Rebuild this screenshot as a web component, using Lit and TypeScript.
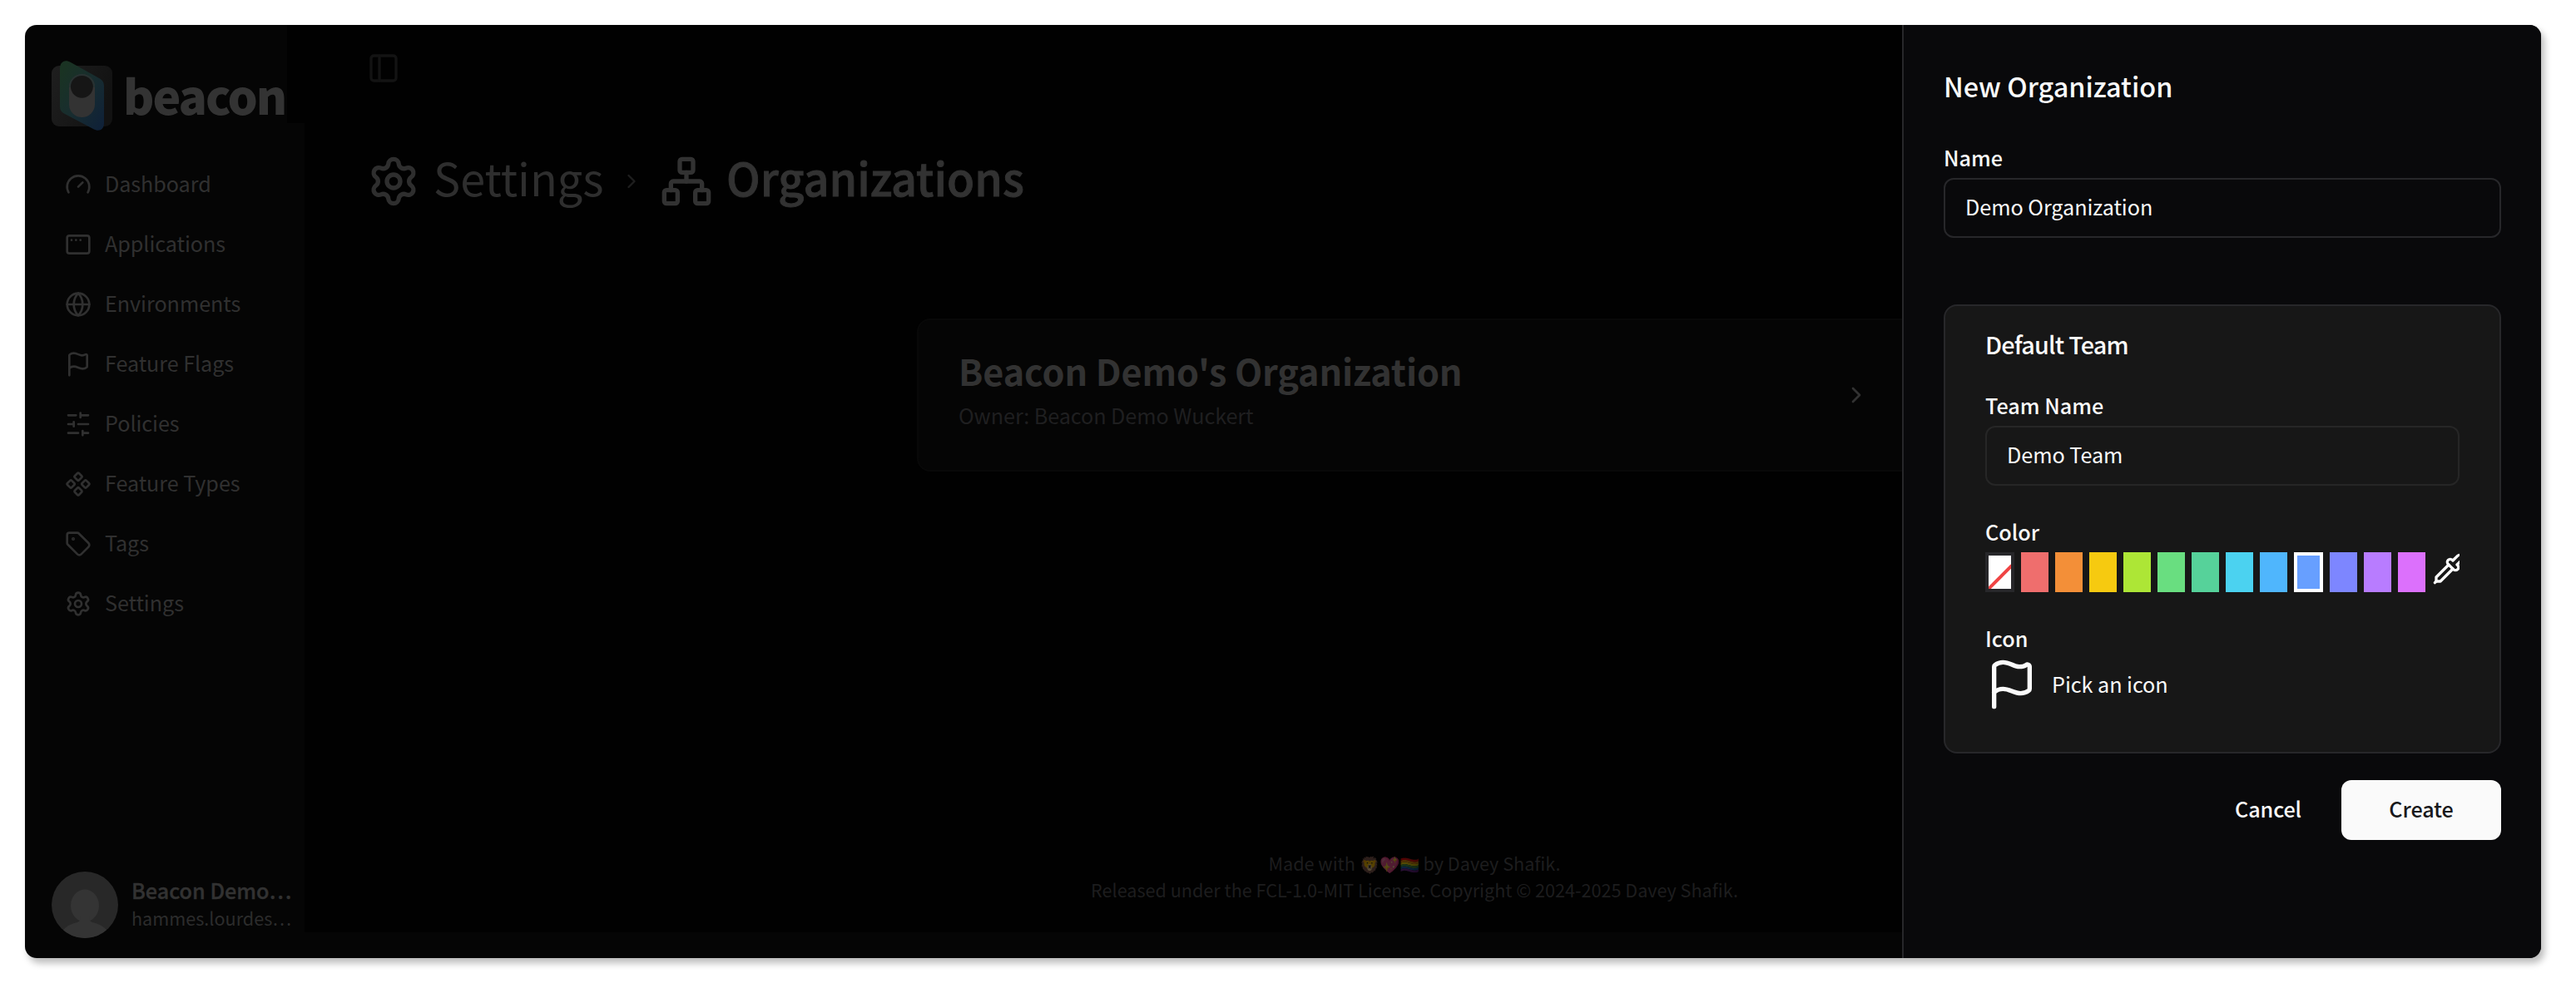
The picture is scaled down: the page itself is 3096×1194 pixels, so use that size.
import { LitElement, html, svg, css } from "lit";
import { classMap } from "lit/directives/class-map.js";
import { styleMap } from "lit/directives/style-map.js";

const ICONS: Record<string, unknown> = {
  gauge: svg`<path d="m12 14 4-4"/><path d="M3.34 19a10 10 0 1 1 17.32 0"/>`,
  app: svg`<rect width="20" height="16" x="2" y="4" rx="2"/><path d="M6 8h.01"/><path d="M10 8h.01"/><path d="M14 8h.01"/>`,
  globe: svg`<circle cx="12" cy="12" r="10"/><path d="M12 2a14.5 14.5 0 0 0 0 20 14.5 14.5 0 0 0 0-20"/><path d="M2 12h20"/>`,
  flag: svg`<path d="M4 22V4a1 1 0 0 1 .4-.8A6 6 0 0 1 8 2c3 0 5 2 7.333 2q2 0 3.067-.8A1 1 0 0 1 20 4v10a1 1 0 0 1-.4.8A6 6 0 0 1 16 16c-3 0-5-2-8-2a6 6 0 0 0-4 1.528"/>`,
  sliders: svg`<path d="M21 4h-7M10 4H3M21 12h-9M8 12H3M21 20h-5M12 20H3M14 2v4M8 10v4M16 18v4"/>`,
  component: svg`<path d="M15.536 11.293a1 1 0 0 0 0 1.414l2.376 2.377a1 1 0 0 0 1.414 0l2.377-2.377a1 1 0 0 0 0-1.414l-2.377-2.377a1 1 0 0 0-1.414 0z"/><path d="M2.297 11.293a1 1 0 0 0 0 1.414l2.377 2.377a1 1 0 0 0 1.414 0l2.377-2.377a1 1 0 0 0 0-1.414L6.088 8.916a1 1 0 0 0-1.414 0z"/><path d="M8.916 17.912a1 1 0 0 0 0 1.415l2.377 2.376a1 1 0 0 0 1.414 0l2.377-2.376a1 1 0 0 0 0-1.415l-2.377-2.376a1 1 0 0 0-1.414 0z"/><path d="M8.916 4.674a1 1 0 0 0 0 1.414l2.377 2.376a1 1 0 0 0 1.414 0l2.377-2.376a1 1 0 0 0 0-1.414l-2.377-2.377a1 1 0 0 0-1.414 0z"/>`,
  tag: svg`<path d="M12.586 2.586A2 2 0 0 0 11.172 2H4a2 2 0 0 0-2 2v7.172a2 2 0 0 0 .586 1.414l8.704 8.704a2.426 2.426 0 0 0 3.42 0l6.58-6.58a2.426 2.426 0 0 0 0-3.42z"/><circle cx="7.5" cy="7.5" r=".5" fill="currentColor"/>`,
  settings: svg`<path d="M9.671 4.136a2.34 2.34 0 0 1 4.659 0 2.34 2.34 0 0 0 3.319 1.915 2.34 2.34 0 0 1 2.33 4.033 2.34 2.34 0 0 0 0 3.831 2.34 2.34 0 0 1-2.33 4.033 2.34 2.34 0 0 0-3.319 1.915 2.34 2.34 0 0 1-4.659 0 2.34 2.34 0 0 0-3.32-1.915 2.34 2.34 0 0 1-2.33-4.033 2.34 2.34 0 0 0 0-3.831A2.34 2.34 0 0 1 6.35 6.051a2.34 2.34 0 0 0 3.319-1.915"/><circle cx="12" cy="12" r="3"/>`,
  panel: svg`<rect width="18" height="18" x="3" y="3" rx="2"/><path d="M9 3v18"/>`,
  network: svg`<rect x="16" y="16" width="6" height="6" rx="1"/><rect x="2" y="16" width="6" height="6" rx="1"/><rect x="9" y="2" width="6" height="6" rx="1"/><path d="M5 16v-3a1 1 0 0 1 1-1h12a1 1 0 0 1 1 1v3"/><path d="M12 12V8"/>`,
  chevron: svg`<path d="m9 18 6-6-6-6"/>`,
  pipette: svg`<path d="m2 22 1-1h3l9-9"/><path d="M3 21v-3l9-9"/><path d="m15 6 3.4-3.4a2.1 2.1 0 1 1 3 3L18 9l.4.4a2.1 2.1 0 1 1-3 3l-3.8-3.8a2.1 2.1 0 1 1 3-3l.4.4Z"/>`,
};

const icon = (name: string, size: number) => html`<svg
  class="icon" width=${size} height=${size} viewBox="0 0 24 24" fill="none"
  stroke="currentColor" stroke-width="2" stroke-linecap="round" stroke-linejoin="round"
>${ICONS[name]}</svg>`;

const BASE = css`
  * { box-sizing: border-box; }
  h1, h2, p, input, button { margin: 0; }
  .icon { display: block; flex: none; }
`;

const NAV: [string, string][] = [
  ["gauge", "Dashboard"],
  ["app", "Applications"],
  ["globe", "Environments"],
  ["flag", "Feature Flags"],
  ["sliders", "Policies"],
  ["component", "Feature Types"],
  ["tag", "Tags"],
  ["settings", "Settings"],
];

const SWATCHES = [
  "#ef6e6d", "#f38f38", "#f6ca10", "#ade636", "#69de80", "#56d29a",
  "#4bd2f0", "#4fb6fd", "#679fff", "#7d86ff", "#b87cff", "#dc70fc",
];

class AppSidebar extends LitElement {
  static styles = [BASE, css`
    :host {
      display: flex; flex-direction: column; width: 336px; flex: none;
      padding: 43px 0 24px 32px; color: #303030;
    }
    .brand { display: flex; align-items: center; height: 84px; gap: 13px; color: #333; }
    .logo { display: block; flex: none; overflow: visible; }
    .word { font-size: 57px; font-weight: 900; line-height: 80px; letter-spacing: -2.1px; padding-bottom: 4px; }
    .nav { display: flex; flex-direction: column; margin-top: 29px; flex: 1; }
    .item { display: flex; align-items: center; gap: 16px; height: 72px; padding-left: 16px; }
    .label { line-height: 36px; padding-bottom: 4px; letter-spacing: -.07px; }
    .user { display: flex; align-items: center; gap: 16px; }
    .avatar { display: block; flex: none; border-radius: 50%; }
    .who { padding-bottom: 4px; white-space: nowrap; }
    .name { line-height: 36px; font-weight: 500; color: #323232; -webkit-text-stroke: .4px #323232; }
    .mail { line-height: 32px; font-size: 21.6px; color: #2c2c2c; }
  `];
  render() {
    return html`
      <div class="brand">
        <svg class="logo" width="73" height="84" viewBox="0 0 73 84">
          <defs>
            <linearGradient id="sq" x1="0" y1="0" x2="1" y2=".4">
              <stop offset="0" stop-color="#1f1f1f"/><stop offset="1" stop-color="#121212"/>
            </linearGradient>
            <linearGradient id="pg" x1="0" y1="0" x2="1" y2="1">
              <stop offset=".1" stop-color="#1a3323"/><stop offset=".5" stop-color="#182d2f"/><stop offset=".95" stop-color="#0f2138"/>
            </linearGradient>
          </defs>
          <rect x="0" y="6" width="73" height="73" rx="9" fill="url(#sq)"/>
          <path d="M10 10C10 1 16-2 23 2L58 21.5Q63 24.5 63 30V75C63 83 57 86 50 82L15 63.500Q10 61 10 55Z" fill="url(#pg)"/>
          <rect x="21" y="16" width="31" height="52" rx="15.500" fill="#333"/>
          <path d="M21 32a15.500 16 0 0 1 31 0" fill="#283232"/>
          <circle cx="36.400" cy="31.300" r="13.400" fill="#161616"/>
        </svg>
        <div class="word">beacon</div>
      </div>
      <nav class="nav">
        ${NAV.map(([i, t]) => html`<div class="item">${icon(i, 32)}<span class="label">${t}</span></div>`)}
      </nav>
      <div class="user">
        <svg class="avatar" width="80" height="80" viewBox="0 0 80 80">
          <rect width="80" height="80" fill="#282828"/>
          <ellipse cx="40" cy="41" rx="17" ry="19.500" fill="#343434"/>
          <path d="M12 72Q20 63 31 61Q36 59 34 54H46Q44 59 49 61Q60 63 68 72V80H12Z" fill="#343434"/>
        </svg>
        <div class="who">
          <div class="name">Beacon Demo…</div>
          <div class="mail">hammes.lourdes…</div>
        </div>
      </div>`;
  }
}
customElements.define("app-sidebar", AppSidebar);

class OrgMain extends LitElement {
  static styles = [BASE, css`
    :host {
      display: flex; flex-direction: column; flex: 1;
      background: #010101; color: #323232;
    }
    .top {
      display: flex; align-items: center; height: 118px; flex: none;
      margin-left: -21px; padding: 0 0 14px 96px; background: #010101; color: #131313;
    }
    .crumbs { display: flex; align-items: center; height: 64px; margin: 38px 0 0 75px; }
    .crumb { display: flex; align-items: center; gap: 16px; font-size: 54px; white-space: nowrap; }
    .parent { width: 304px; color: #2e2e2e; }
    .text { line-height: 72px; padding-bottom: 11px; }
    .current { margin-left: 20px; font-weight: 500; -webkit-text-stroke: .9px #323232; }
    .sep { color: #1e1e1e; display: flex; }
    .org {
      display: flex; justify-content: space-between; align-items: flex-start;
      align-self: center; width: 1200px; height: 184px; margin-top: 133px;
      padding: 32px 53px 0 48px; border: 2px solid #080808; border-radius: 16px; background: #050505;
    }
    .title { font-size: 43.2px; font-weight: 700; line-height: 56px; letter-spacing: -.1px; }
    .owner { line-height: 36px; margin-top: 8px; color: #1f1f20; letter-spacing: -.08px; }
    .go { padding-top: 42px; }
    .foot {
      margin-top: auto; padding: 0 4px 35px 0; text-align: center;
      font-size: 21.6px; line-height: 32px; color: #1d1d1e;
    }
    .emoji { font-size: 19.5px; opacity: .33; line-height: 1; }
  `];
  render() {
    return html`
      <header class="top">${icon("panel", 40)}</header>
      <div class="crumbs">
        <div class="crumb parent">${icon("settings", 64)}<span class="text">Settings</span></div>
        <span class="sep">${icon("chevron", 28)}</span>
        <div class="crumb current">${icon("network", 64)}<span class="text">Organizations</span></div>
      </div>
      <section class="org">
        <div>
          <h2 class="title">Beacon Demo's Organization</h2>
          <p class="owner">Owner: Beacon Demo Wuckert</p>
        </div>
        <div class="go">${icon("chevron", 32)}</div>
      </section>
      <footer class="foot">
        <div>Made with <span class="emoji">🦁💖🏳️‍🌈</span> by Davey Shafik.</div>
        <div>Released under the FCL-1.0-MIT License. Copyright © 2024-2025 Davey Shafik.</div>
      </footer>`;
  }
}
customElements.define("org-main", OrgMain);

class OrgDrawer extends LitElement {
  static properties = { selected: { type: Number } };
  declare selected: number;
  constructor() {
    super();
    this.selected = 8;
  }
  static styles = [BASE, css`
    :host {
      display: block; padding: 51px 48px 0; background: #09090b; color: #fafafa;
      border-left: 2px solid #27272a;
    }
    .heading { font-size: 32.4px; font-weight: 500; line-height: 44px; }
    .label { display: block; font-weight: 500; line-height: 36px; }
    .first { margin-top: 46px; }
    .field {
      display: block; width: 100%; height: 72px; margin-top: 7px; padding: 0 24px 4px;
      border: 2px solid #27272a; border-radius: 12px; background: transparent; outline: none;
      color: #fafafa; font: inherit; letter-spacing: -.05px;
    }
    .team {
      height: 540px; margin-top: 80px; padding: 26px 48px 0;
      border: 2px solid #27272a; border-radius: 16px; background: #171717;
    }
    .team .field { border-color: #262626; }
    .sub { font-size: 28.8px; font-weight: 500; line-height: 40px; letter-spacing: -.8px; margin-bottom: 35px; }
    .next { margin-top: 37px; }
    .swatches { display: flex; gap: 8px; height: 48px; margin-top: 7px; }
    .swatch { width: 33px; height: 48px; flex: none; }
    .none { width: 35px; border: 4px solid #27272a; background: #fff; }
    .slash { display: block; }
    .on { width: 35px; border: 4px solid #fff; }
    .pick { width: 33px; overflow: hidden; }
    .iconrow { display: flex; align-items: center; gap: 16px; margin-top: 6px; }
    .hint { line-height: 36px; padding-bottom: 3px; letter-spacing: -.05px; }
    .actions { display: flex; justify-content: flex-end; gap: 16px; margin-top: 32px; }
    .btn {
      height: 72px; padding: 0 0 4px; border: 0; border-radius: 12px; background: transparent;
      color: #fafafa; font: inherit; font-weight: 500; letter-spacing: -.1px;
    }
    .cancel { width: 144px; }
    .create { width: 192px; background: #fafafa; color: #18181b; }
  `];
  render() {
    return html`
      <h1 class="heading">New Organization</h1>
      <label class="label first">Name</label>
      <input class="field" .value=${"Demo Organization"}>
      <section class="team">
        <h2 class="sub">Default Team</h2>
        <label class="label">Team Name</label>
        <input class="field" .value=${"Demo Team"}>
        <span class="label next">Color</span>
        <div class="swatches">
          <div class="swatch none">
            <svg class="slash" width="27" height="40" viewBox="0 0 27 40"><path d="M-1 41L28 12" stroke="#ef4444" stroke-width="4"/></svg>
          </div>
          ${SWATCHES.map((c, i) => html`<div
            class=${classMap({ swatch: true, on: i === this.selected })}
            style=${styleMap({ backgroundColor: c })}
            @click=${() => (this.selected = i)}
          ></div>`)}
          <div class="pick">${icon("pipette", 40)}</div>
        </div>
        <span class="label next">Icon</span>
        <div class="iconrow">${icon("flag", 64)}<span class="hint">Pick an icon</span></div>
      </section>
      <div class="actions">
        <button class="btn cancel">Cancel</button>
        <button class="btn create">Create</button>
      </div>`;
  }
}
customElements.define("org-drawer", OrgDrawer);

class AppRoot extends LitElement {
  static styles = [BASE, css`
    :host {
      display: block; height: 1194px; padding: 30px 42px 42px 30px; background: #fff; box-sizing: border-box;
      font-family: "Noto Sans CJK SC", "Noto Sans", sans-serif; font-size: 25.2px;
    }
    .window {
      display: flex; position: relative; height: 1122px; overflow: hidden;
      border-radius: 14px; background: #050505;
    }
    .shade { height: 1122px; border-radius: 14px; box-shadow: 4px 6px 8px rgba(0, 0, 0, .27); }
    .main { margin: 0 16px 31px 0; }
    .drawer { position: absolute; top: 0; right: 0; bottom: 0; width: 768px; }
  `];
  render() {
    return html`<div class="shade"><div class="window">
      <app-sidebar></app-sidebar>
      <org-main class="main"></org-main>
      <org-drawer class="drawer"></org-drawer>
    </div></div>`;
  }
}
customElements.define("app-root", AppRoot);
